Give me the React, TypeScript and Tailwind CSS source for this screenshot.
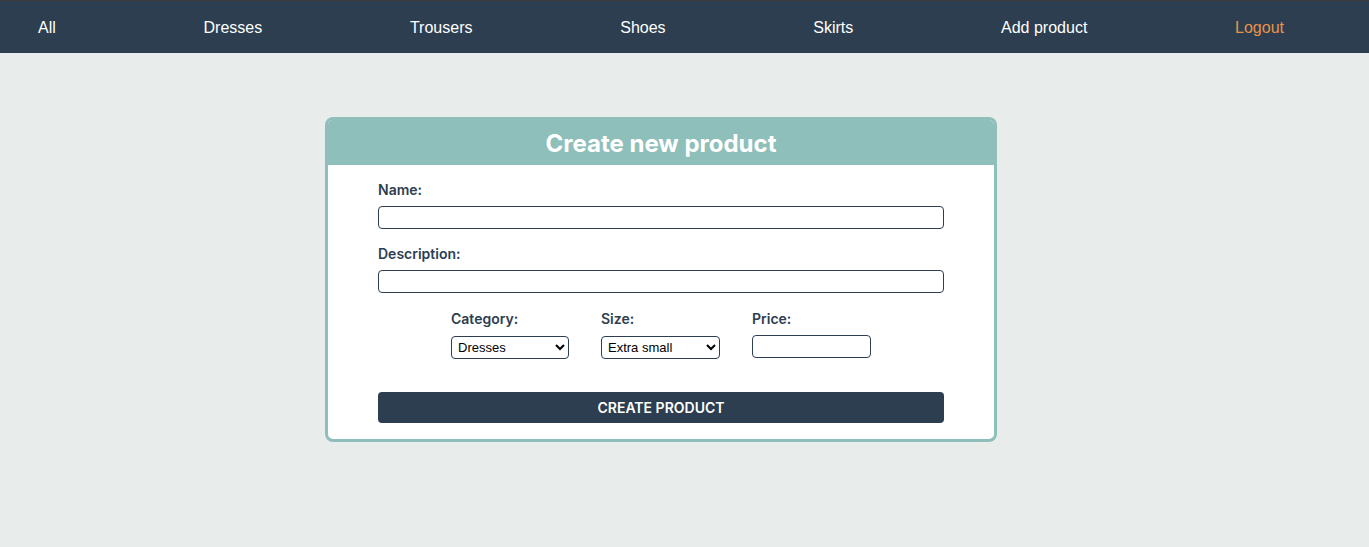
const navItems = ["All", "Dresses", "Trousers", "Shoes", "Skirts", "Add product"];

const Navbar = () => {
  return (
    <nav className="h-[53px] bg-[#2c3e50] border-t border-[#3d3d3d] flex items-center justify-between pl-[38px] pr-[85px] pt-[2px] font-['Liberation_Sans',Arial,sans-serif] text-[16px]">
      {navItems.map((item) => (
        <a key={item} href="#" className="text-white">
          {item}
        </a>
      ))}
      <a href="#" className="text-[#e8944a]">
        Logout
      </a>
    </nav>
  );
};

const labelCls = "block text-[14px] leading-[20px] font-semibold text-[#2c3e50]";
const fieldCls =
  "block border border-[#2c3e50] rounded-[4px] bg-white h-[23px] font-['Liberation_Sans',Arial,sans-serif] text-[13px] text-black";

const CreateProduct = () => {
  return (
    <div className="w-[672px] ml-[325px] mt-[64px] border-[3px] border-[#8fbfba] rounded-[8px] bg-white overflow-hidden">
      <div className="bg-[#8fbfba] h-[45px] flex items-center justify-center">
        <h1 className="text-white text-[24px] font-bold leading-none pt-[2px]">Create new product</h1>
      </div>
      <form className="px-[50px] pt-[15px] pb-[16px]">
        <label className={labelCls}>Name:</label>
        <input type="text" className={`${fieldCls} w-full mt-[6px]`} />

        <label className={`${labelCls} mt-[15px]`}>Description:</label>
        <input type="text" className={`${fieldCls} w-full mt-[6px]`} />

        <div className="flex justify-center gap-[32px] mt-[16px]">
          <div>
            <label className={labelCls}>Category:</label>
            <select className={`${fieldCls} w-[118px] mt-[7px] px-[2px]`} defaultValue="Dresses">
              <option>Dresses</option>
              <option>Trousers</option>
              <option>Shoes</option>
              <option>Skirts</option>
            </select>
          </div>
          <div>
            <label className={labelCls}>Size:</label>
            <select className={`${fieldCls} w-[119px] mt-[7px] px-[2px]`} defaultValue="Extra small">
              <option>Extra small</option>
              <option>Small</option>
              <option>Medium</option>
              <option>Large</option>
            </select>
          </div>
          <div>
            <label className={labelCls}>Price:</label>
            <input type="number" className={`${fieldCls} w-[119px] mt-[6px]`} />
          </div>
        </div>

        <button
          type="button"
          className="mt-[33px] w-full h-[31px] bg-[#2c3e50] rounded-[4px] text-white text-[14px] font-semibold uppercase"
        >
          Create product
        </button>
      </form>
    </div>
  );
};

export default function App() {
  return (
    <div className="min-h-[547px] bg-[#e8ecea] font-['Inter','Noto_Sans',sans-serif]">
      <Navbar />
      <CreateProduct />
    </div>
  );
}
